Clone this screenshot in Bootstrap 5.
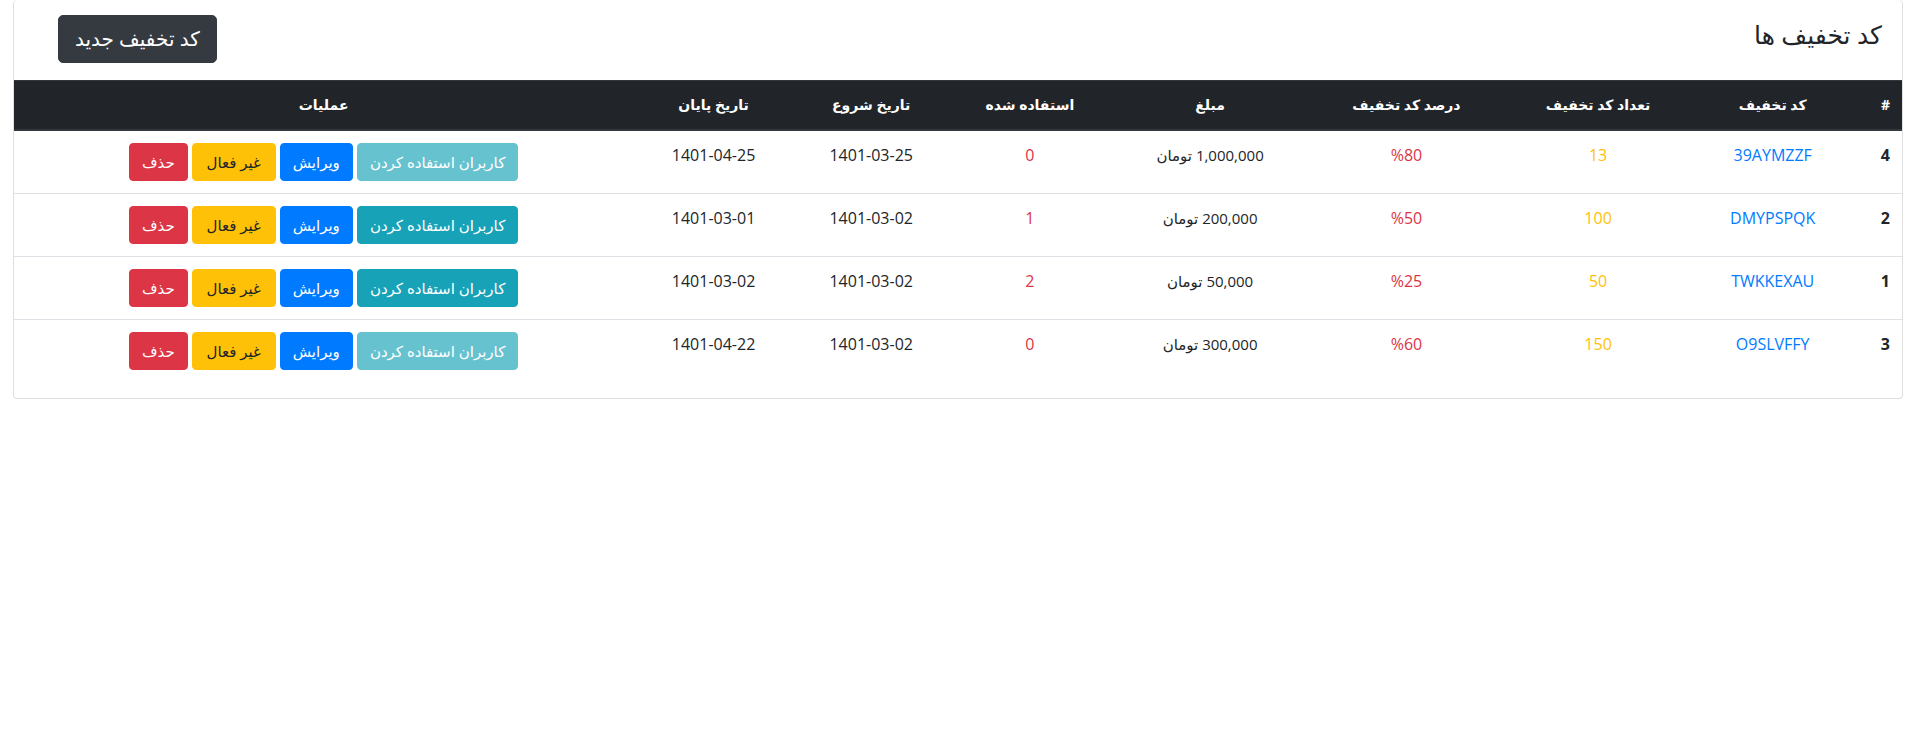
<!DOCTYPE html>
<html lang="fa" dir="rtl">
<head>
<meta charset="utf-8">
<meta name="viewport" content="width=device-width, initial-scale=1">
<title>کد تخفیف ها</title>
<link href="https://cdn.jsdelivr.net/npm/bootstrap@5.3.0/dist/css/bootstrap.min.css" rel="stylesheet">
<style>
  body { font-family: "Open Sans", "DejaVu Sans", sans-serif; font-size: 16px; line-height: 24px; color: #212529; background: #fff; }
  .panel { margin: 0 14px 0 13px; border: 1px solid #dfdfdf; border-top: 0; border-radius: 4px; }
  .panel-head { padding: 15px 20px 17px 44px; }
  .panel-head h1 { font-size: 25px; line-height: 38px; font-weight: 400; }
  .btn { --bs-btn-border-radius: 4px; --bs-btn-font-size: 15px; --bs-btn-line-height: 24px; }
  .btn-new { --bs-btn-bg: #343a40; --bs-btn-border-color: #343a40; --bs-btn-color: #fff; --bs-btn-padding-x: 16px; --bs-btn-padding-y: 8px; --bs-btn-font-size: 20px; --bs-btn-line-height: 30px; --bs-btn-border-radius: 5px; }
  .btn-info { --bs-btn-color: #fff; --bs-btn-bg: #17a2b8; --bs-btn-border-color: #17a2b8; --bs-btn-disabled-color: #fff; --bs-btn-disabled-bg: #17a2b8; --bs-btn-disabled-border-color: #17a2b8; }
  .btn-primary { --bs-btn-bg: #007bff; --bs-btn-border-color: #007bff; }
  .btn-warning { --bs-btn-color: #212529; min-width: 84px; }
  .coupons { table-layout: fixed; --bs-table-color: #212529; }
  .coupons > :not(caption) > * > * { padding: 12px; border-bottom: 0; border-top: 1px solid #dee2e6; }
  .coupons > thead > tr > th { border-top: 1px solid #32383e; border-bottom: 2px solid #32383e; background: #212529; color: #fff; font-size: 14px; }
  .coupons > tbody > tr:first-child > * { border-top: 0; }
  .coupons td.c-code { color: #007bff; }
  .coupons td.c-count { color: #ffc107; }
  .coupons td.c-red { color: #dc3545; }
  .coupons td.c-sum { font-size: 15px; }
  .coupons .c-num { width: 2.6%; text-align: start; }
  .coupons .c-code { width: 8.5%; }
  .coupons .c-count { width: 10%; }
  .coupons .c-pct { width: 10.3%; }
  .coupons .c-sum { width: 10.5%; }
  .coupons .c-used { width: 8.6%; }
  .coupons .c-start { width: 8.2%; }
  .coupons .c-end { width: 8.5%; }
</style>
</head>
<body>
<main class="panel">
  <header class="panel-head d-flex justify-content-between align-items-start">
    <h1 class="m-0">کد تخفیف ها</h1>
    <a href="#" class="btn btn-new">کد تخفیف جدید</a>
  </header>
  <table class="table coupons text-center align-top mb-3">
    <thead>
      <tr>
        <th scope="col" class="c-num">#</th>
        <th scope="col" class="c-code">کد تخفیف</th>
        <th scope="col" class="c-count">تعداد کد تخفیف</th>
        <th scope="col" class="c-pct">درصد کد تخفیف</th>
        <th scope="col" class="c-sum">مبلغ</th>
        <th scope="col" class="c-used">استفاده شده</th>
        <th scope="col" class="c-start">تاریخ شروع</th>
        <th scope="col" class="c-end">تاریخ پایان</th>
        <th scope="col">عملیات</th>
      </tr>
    </thead>
    <tbody>
      <tr>
        <th scope="row" class="c-num">4</th><td class="c-code">39AYMZZF</td><td class="c-count">13</td><td class="c-red">%80</td><td class="c-sum">1,000,000 تومان</td><td class="c-red">0</td><td dir="ltr">1401-03-25</td><td dir="ltr">1401-04-25</td>
        <td><div class="d-flex justify-content-center gap-1">
          <a href="#" class="btn btn-info disabled" aria-disabled="true">کاربران استفاده کردن</a>
          <a href="#" class="btn btn-primary">ویرایش</a>
          <button type="button" class="btn btn-warning">غیر فعال</button>
          <button type="button" class="btn btn-danger">حذف</button>
        </div></td>
      </tr>
      <tr>
        <th scope="row" class="c-num">2</th><td class="c-code">DMYPSPQK</td><td class="c-count">100</td><td class="c-red">%50</td><td class="c-sum">200,000 تومان</td><td class="c-red">1</td><td dir="ltr">1401-03-02</td><td dir="ltr">1401-03-01</td>
        <td><div class="d-flex justify-content-center gap-1">
          <a href="#" class="btn btn-info">کاربران استفاده کردن</a>
          <a href="#" class="btn btn-primary">ویرایش</a>
          <button type="button" class="btn btn-warning">غیر فعال</button>
          <button type="button" class="btn btn-danger">حذف</button>
        </div></td>
      </tr>
      <tr>
        <th scope="row" class="c-num">1</th><td class="c-code">TWKKEXAU</td><td class="c-count">50</td><td class="c-red">%25</td><td class="c-sum">50,000 تومان</td><td class="c-red">2</td><td dir="ltr">1401-03-02</td><td dir="ltr">1401-03-02</td>
        <td><div class="d-flex justify-content-center gap-1">
          <a href="#" class="btn btn-info">کاربران استفاده کردن</a>
          <a href="#" class="btn btn-primary">ویرایش</a>
          <button type="button" class="btn btn-warning">غیر فعال</button>
          <button type="button" class="btn btn-danger">حذف</button>
        </div></td>
      </tr>
      <tr>
        <th scope="row" class="c-num">3</th><td class="c-code">O9SLVFFY</td><td class="c-count">150</td><td class="c-red">%60</td><td class="c-sum">300,000 تومان</td><td class="c-red">0</td><td dir="ltr">1401-03-02</td><td dir="ltr">1401-04-22</td>
        <td><div class="d-flex justify-content-center gap-1">
          <a href="#" class="btn btn-info disabled" aria-disabled="true">کاربران استفاده کردن</a>
          <a href="#" class="btn btn-primary">ویرایش</a>
          <button type="button" class="btn btn-warning">غیر فعال</button>
          <button type="button" class="btn btn-danger">حذف</button>
        </div></td>
      </tr>
    </tbody>
  </table>
</main>
<script src="https://cdn.jsdelivr.net/npm/bootstrap@5.3.0/dist/js/bootstrap.bundle.min.js"></script>
</body>
</html>
